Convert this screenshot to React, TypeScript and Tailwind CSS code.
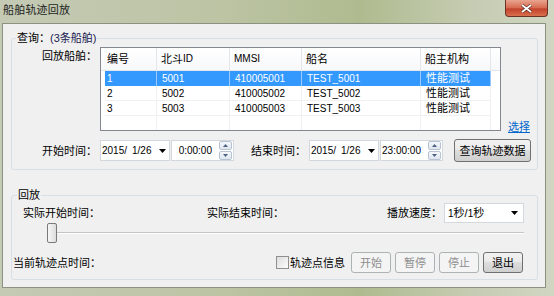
import React from "react";

const headers = ["编号", "北斗ID", "MMSI", "船名", "船主机构"];
const widths = ["w-[56px]", "w-[73px]", "w-[72px]", "w-[119px]", "w-[70px]"];
const rowWidths = ["w-[52px]", "w-[73px]", "w-[72px]", "w-[119px]", "w-[70px]"];

const ships = [
  ["1", "5001", "410005001", "TEST_5001", "性能测试"],
  ["2", "5002", "410005002", "TEST_5002", "性能测试"],
  ["3", "5003", "410005003", "TEST_5003", "性能测试"],
];

function DownArrow() {
  return (
    <svg width="7" height="4" viewBox="0 0 7 4">
      <path d="M0 0h7L3.5 4z" fill="#000" />
    </svg>
  );
}

function Spin() {
  return (
    <div className="flex flex-col w-[13px] h-[19px] gap-[1px]">
      {[0, 1].map((i) => (
        <div
          key={i}
          className="flex-1 flex items-center justify-center border border-[#b8c3d2] rounded-[2px] bg-[linear-gradient(#f4f7fb,#dfe6ef)]"
        >
          <svg width="5" height="3" viewBox="0 0 5 3">
            <path d={i === 0 ? "M0 3h5L2.5 0z" : "M0 0h5L2.5 3z"} fill="#4d6185" />
          </svg>
        </div>
      ))}
    </div>
  );
}

function DateTime({ time }: { time: string }) {
  return (
    <div className="flex gap-[1px]">
      <div className="w-[70px] h-[21px] bg-white border border-[#d3d8de] flex items-center pl-[1px] pr-[3px] text-[10px]">
        <span>2015/</span>
        <span className="ml-[5px]">1/26</span>
        <span className="ml-auto">
          <DownArrow />
        </span>
      </div>
      <div className="w-[63px] h-[21px] bg-white border border-[#d3d8de] flex items-center justify-end pr-[1px] text-[10px]">
        <span className="mr-[7px]">{time}</span>
        <Spin />
      </div>
    </div>
  );
}

function WinButton({
  label,
  disabled,
  className,
}: {
  label: string;
  disabled?: boolean;
  className?: string;
}) {
  return (
    <div
      className={`h-[21px] flex items-center justify-center rounded-[3px] border ${
        disabled
          ? "border-[#adb2b5] bg-[#f4f4f4] text-[#8d8d8d]"
          : "border-[#707070] bg-[linear-gradient(#f2f2f2_0%,#ebebeb_45%,#dddddd_50%,#cfcfcf_100%)] text-black"
      } ${className ?? ""}`}
    >
      {label}
    </div>
  );
}

export default function App() {
  return (
    <div className="w-[554px] h-[296px] flex flex-col overflow-hidden text-[11px] leading-[14px] text-black font-['Liberation_Sans','Noto_Sans_CJK_SC',sans-serif] bg-[linear-gradient(90deg,#c4cab4_0%,#bcc4a4_40%,#afbb8f_65%,#c5ccb2_85%,#d0d6c2_100%)]">
      {/* Title bar */}
      <div className="h-[23px] flex items-start shrink-0">
        <span className="pl-[3px] pt-[3px] text-[11px] leading-[14px] text-[#1e1e1e] tracking-[0.2px]">
          船舶轨迹回放
        </span>
        <div className="ml-auto mr-[6px] w-[43px] h-[17px] rounded-b-[4px] border border-t-0 border-[#6b3326] bg-[linear-gradient(#e9a48f_0%,#d66a50_50%,#c2412a_55%,#d9704f_100%)] flex items-center justify-center">
          <svg width="11" height="9" viewBox="0 0 11 9">
            <path d="M1 1l9 7M10 1L1 8" stroke="#5a2a20" strokeWidth="3.2" />
            <path d="M1 1l9 7M10 1L1 8" stroke="#fff" strokeWidth="1.8" />
          </svg>
        </div>
      </div>

      {/* Client area */}
      <div className="ml-[2px] w-[544px] h-[265px] border border-[#8c9282] bg-[#f0f0f0]">
        {/* Query group */}
        <fieldset className="ml-[8px] mt-[7px] w-[527px] h-[139px] border border-[#d5dfe5] rounded-[3px] p-0 m-0">
          <legend className="ml-[4px] px-[1px] text-[11px] leading-[14px]">
            查询：<span className="text-[#1c1c50]">(3条船舶)</span>
          </legend>

          <div className="flex mt-[2px] h-[84px]">
            <div className="w-[88px] text-right pr-[3px] mt-[2px]">回放船舶：</div>
            <div className="w-[401px] h-[84px] border border-[#828790] bg-white flex flex-col">
              <div className="flex h-[23px] border-b border-[#e3e6ea] bg-[linear-gradient(#ffffff,#f7f8fa)]">
                {headers.map((h, i) => (
                  <div
                    key={h}
                    className={`${widths[i]} border-r border-[#e3e6ea] flex items-center ${
                      i === 0 ? "pl-[6px]" : "pl-[4px]"
                    } ${i === 2 ? "text-[10px]" : ""}`}
                  >
                    {i === 1 ? (
                      <>
                        北斗<span className="text-[10px]">ID</span>
                      </>
                    ) : (
                      h
                    )}
                  </div>
                ))}
              </div>
              {ships.map((row, r) => (
                <div key={r} className="flex pl-[4px] h-[15px]">
                  {row.map((c, i) => (
                    <div
                      key={i}
                      className={`${rowWidths[i]} h-[15px] leading-[15px] border-r ${
                        i === 0 ? "pl-[2px]" : "pl-[5px]"
                      } ${i < 4 ? "text-[10px]" : ""} ${
                        r === 0
                          ? "bg-[#3399ff] text-white border-[#9cc9f5]"
                          : "border-[#f0f0f0] border-b"
                      }`}
                    >
                      {c}
                    </div>
                  ))}
                </div>
              ))}
              <div className="flex pl-[4px] flex-1">
                {rowWidths.map((w, i) => (
                  <div key={i} className={`${w} border-r border-[#f0f0f0]`} />
                ))}
              </div>
            </div>
            <span className="self-end mb-[-3px] ml-[7px] text-[#0066cc] underline">选择</span>
          </div>

          <div className="flex items-center h-[23px] mt-[8px]">
            <div className="w-[88px] text-right pr-[3px]">开始时间：</div>
            <DateTime time="0:00:00" />
            <div className="w-[75px] text-right pr-[3px]">结束时间：</div>
            <DateTime time="23:00:00" />
            <WinButton label="查询轨迹数据" className="ml-[11px] w-[77px] h-[23px]" />
          </div>
        </fieldset>

        {/* Playback group */}
        <fieldset className="ml-[8px] mt-[18px] w-[527px] h-[92px] border border-[#d5dfe5] rounded-[3px] p-0 m-0">
          <legend className="ml-[5px] px-[1px] text-[11px] leading-[14px]">回放</legend>

          <div className="flex items-center h-[20px] mt-[1px]">
            <div className="ml-[11px] w-[184px]">实际开始时间：</div>
            <div className="w-[180px]">实际结束时间：</div>
            <div className="w-[57px]">播放速度：</div>
            <div className="w-[80px] h-[20px] bg-white border border-[#d3d8de] flex items-center pl-[3px] pr-[5px]">
              <span>
                <span className="text-[10px]">1</span>秒/<span className="text-[10px]">1</span>秒
              </span>
              <span className="ml-auto">
                <DownArrow />
              </span>
            </div>
          </div>

          <div className="relative ml-[40px] w-[472px] h-[20px] flex items-center">
            <div className="w-full h-[2px] border-t border-[#c4c4c4] border-b border-b-white" />
            <div className="absolute left-[-5px] top-0 w-[10px] h-[20px] rounded-[2px] border border-[#7a7a7a] bg-[linear-gradient(90deg,#f7f7f7,#dcdcdc)]" />
          </div>

          <div className="flex items-center h-[21px] mt-[9px]">
            <div className="ml-[1px] w-[263px]">当前轨迹点时间：</div>
            <div className="w-[13px] h-[13px] border border-[#8f8f8f] bg-[linear-gradient(135deg,#dcdcdc,#fdfdfd)]" />
            <span className="ml-[1px]">轨迹点信息</span>
            <div className="flex gap-[4px] ml-[6px]">
              <WinButton label="开始" disabled className="w-[40px]" />
              <WinButton label="暂停" disabled className="w-[40px]" />
              <WinButton label="停止" disabled className="w-[40px]" />
              <WinButton label="退出" className="w-[40px]" />
            </div>
          </div>
        </fieldset>
      </div>
    </div>
  );
}
